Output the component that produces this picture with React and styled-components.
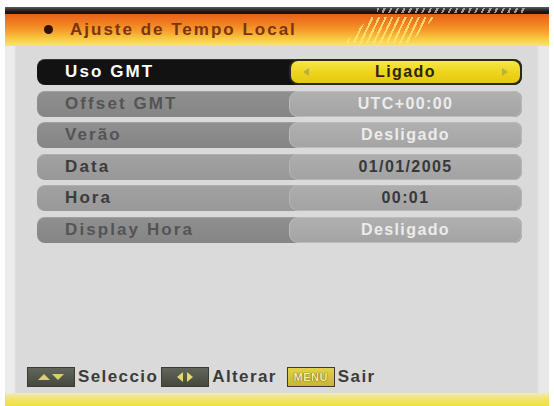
import React from "react";
import styled, { createGlobalStyle } from "styled-components";

const Global = createGlobalStyle`
  html, body { margin: 0; padding: 0; background: #ffffff; }
  body { font-family: "Liberation Sans", Arial, sans-serif; }
`;

const Screen = styled.div`
  margin: 7px 5px 0 5px;
  width: 544px;
  height: 399px;
  display: flex;
  flex-direction: column;
  overflow: hidden;
`;

const TopBar = styled.div`
  height: 7px;
  flex: none;
  background: linear-gradient(to bottom, #5a5a5a, #1c1c1c 60%, #101010);
  display: flex;
  justify-content: flex-end;
  padding-right: 22px;
`;

const TopStripes = styled.div`
  width: 150px;
  height: 5px;
  margin-top: 1px;
  background: repeating-linear-gradient(115deg, rgba(200,200,200,0.75) 0 2px, transparent 2px 6px);
`;

const Header = styled.div`
  height: 32px;
  flex: none;
  background: linear-gradient(to bottom, #e5621a 0%, #f07a1e 25%, #f59a2c 50%, #f8c63e 75%, #f6e86a 100%);
  display: flex;
  align-items: center;
  position: relative;
`;

const Bullet = styled.span`
  width: 9px;
  height: 9px;
  border-radius: 50%;
  background: #2a1408;
  margin-left: 39px;
  margin-top: -2px;
`;

const Title = styled.span`
  margin-left: 17px;
  font-size: 17px;
  font-weight: bold;
  letter-spacing: 2px;
  color: #7a3410;
  margin-top: -1px;
`;

const HeaderStripes = styled.div`
  position: absolute;
  left: 340px;
  top: 3px;
  width: 90px;
  height: 26px;
  clip-path: polygon(28% 0, 100% 0, 72% 100%, 0 100%);
  background: repeating-linear-gradient(115deg, rgba(255,230,120,0.85) 0 2px, transparent 2px 6px);
`;

const Body = styled.div`
  flex: 1;
  background: linear-gradient(to right, #ececec 0, #ececec 9px, #dadada 11px, #dadada calc(100% - 12px), #e8e8e8 calc(100% - 10px));
  display: flex;
  flex-direction: column;
  padding-top: 13px;
`;

const List = styled.div`
  margin-left: 32px;
  width: 485px;
  display: flex;
  flex-direction: column;
  gap: 5.5px;
`;

const Row = styled.div`
  height: 26px;
  border-radius: 8px;
  background: ${(p) => p.$bg};
  display: flex;
  align-items: center;
  box-shadow: inset 0 1px 0 rgba(255,255,255,0.15);
`;

const Label = styled.span`
  width: 224px;
  padding-left: 28px;
  font-size: 17px;
  font-weight: bold;
  letter-spacing: 2.1px;
  color: ${(p) => p.$color};
`;

const Value = styled.div`
  flex: 1;
  align-self: stretch;
  border-radius: 9px;
  box-sizing: border-box;
  display: flex;
  align-items: center;
  justify-content: center;
  position: relative;
  font-size: 16px;
  font-weight: bold;
  letter-spacing: 1.4px;
  color: ${(p) => p.$color};
  background: ${(p) => p.$bg};
  border: ${(p) => p.$border};
`;

const Arrow = styled.span`
  position: absolute;
  top: 50%;
  ${(p) => (p.$side === "left" ? "left: 12px;" : "right: 12px;")}
  transform: translateY(-50%);
  width: 0;
  height: 0;
  border-top: 4px solid transparent;
  border-bottom: 4px solid transparent;
  ${(p) =>
    p.$side === "left"
      ? "border-right: 6px solid #b8ae4a;"
      : "border-left: 6px solid #b8ae4a;"}
`;

const Spacer = styled.div`
  flex: 1;
`;

const Legend = styled.div`
  display: flex;
  align-items: center;
  padding-left: 22px;
  height: 22px;
  margin-bottom: 5px;
`;

const KeyBox = styled.span`
  width: 48px;
  height: 20px;
  box-sizing: border-box;
  border: 1px solid #3a3c30;
  background: ${(p) => (p.$yellow ? "linear-gradient(#e2d24a, #c8b630)" : "linear-gradient(#62655a, #46483d)")};
  display: flex;
  align-items: center;
  justify-content: center;
  gap: 2px;
  margin-right: 3px;
`;

const KeyText = styled.span`
  font-size: 11px;
  font-weight: bold;
  color: #f6f0a0;
  letter-spacing: 0.5px;
  text-shadow: 0 0 1px #605010, 0 0 1px #605010;
`;

const LegendText = styled.span`
  font-size: 17px;
  font-weight: bold;
  color: #3a3c38;
  letter-spacing: 1.4px;
  margin-right: ${(p) => p.$gap || 0}px;
`;

const BottomStrip = styled.div`
  height: 13px;
  flex: none;
  background: linear-gradient(to bottom, #ecebc4 0%, #f1e57a 35%, #f0df3c 100%);
`;

const rows = [
  { label: "Uso GMT", value: "Ligado", kind: "active" },
  { label: "Offset GMT", value: "UTC+00:00", kind: "disabled" },
  { label: "Verão", value: "Desligado", kind: "disabled" },
  { label: "Data", value: "01/01/2005", kind: "normal" },
  { label: "Hora", value: "00:01", kind: "normal" },
  { label: "Display Hora", value: "Desligado", kind: "disabled" },
];

const styles = {
  active: {
    row: "#121212",
    label: "#ffffff",
    value: "linear-gradient(to bottom, #f7e84a, #eed51c 50%, #e6c810)",
    valueColor: "#2a2410",
    border: "2px solid #2a2a1a",
  },
  disabled: {
    row: "linear-gradient(to bottom, #909090, #858585)",
    label: "#545454",
    value: "linear-gradient(to bottom, #b0b0b0, #a4a4a4)",
    valueColor: "#ececec",
    border: "1px solid #bcbcbc",
  },
  normal: {
    row: "linear-gradient(to bottom, #a2a2a2, #989898)",
    label: "#3c3c3c",
    value: "linear-gradient(to bottom, #adadad, #a3a3a3)",
    valueColor: "#383838",
    border: "1px solid #b6b6b6",
  },
};

const UpDown = () => (
  <svg width="30" height="10" viewBox="0 0 30 10">
    <polygon points="2,8 8,2 14,8" fill="#d8d070" />
    <polygon points="16,2 28,2 22,8" fill="#d8d070" />
  </svg>
);

const LeftRight = () => (
  <svg width="20" height="12" viewBox="0 0 20 12">
    <polygon points="8,1 2,6 8,11" fill="#e0d870" />
    <polygon points="12,1 18,6 12,11" fill="#e0d870" />
  </svg>
);

export default function App() {
  return (
    <>
      <Global />
      <Screen>
        <TopBar>
          <TopStripes />
        </TopBar>
        <Header>
          <Bullet />
          <Title>Ajuste de Tempo Local</Title>
          <HeaderStripes />
        </Header>
        <Body>
          <List>
            {rows.map((r) => {
              const s = styles[r.kind];
              return (
                <Row key={r.label} $bg={s.row}>
                  <Label $color={s.label}>{r.label}</Label>
                  <Value $bg={s.value} $color={s.valueColor} $border={s.border}>
                    {r.kind === "active" && <Arrow $side="left" />}
                    {r.value}
                    {r.kind === "active" && <Arrow $side="right" />}
                  </Value>
                </Row>
              );
            })}
          </List>
          <Spacer />
          <Legend>
            <KeyBox>
              <UpDown />
            </KeyBox>
            <LegendText $gap={3}>Seleccio</LegendText>
            <KeyBox>
              <LeftRight />
            </KeyBox>
            <LegendText $gap={10}>Alterar</LegendText>
            <KeyBox $yellow>
              <KeyText>MENU</KeyText>
            </KeyBox>
            <LegendText>Sair</LegendText>
          </Legend>
        </Body>
        <BottomStrip />
      </Screen>
    </>
  );
}
